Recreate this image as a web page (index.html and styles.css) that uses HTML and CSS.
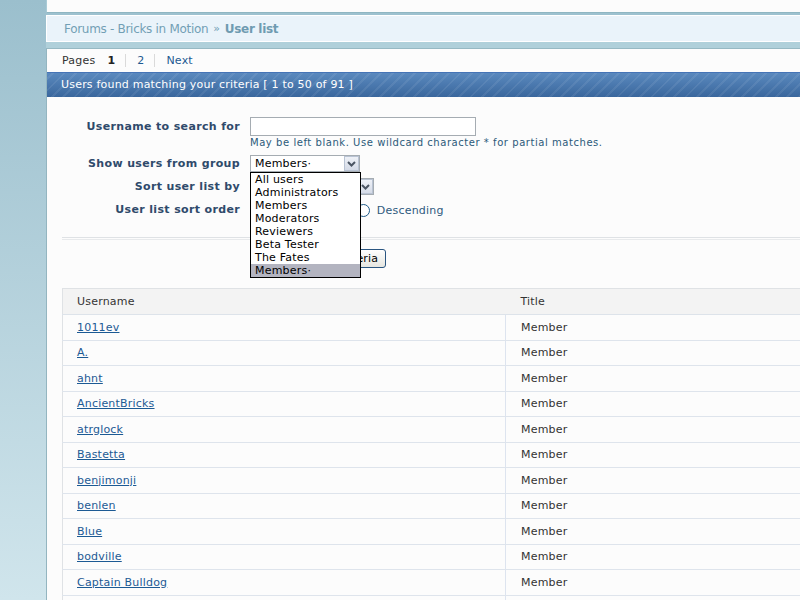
FILE: index.html
```html
<!DOCTYPE html>
<html>
<head>
<meta charset="utf-8">
<title>Forums - Bricks in Motion - User list</title>
<link rel="stylesheet" href="styles.css">
</head>
<body>
<div class="page">
  <div class="topblock"></div>
  <div class="band1"></div>
  <div class="crumbs"><a class="crumb-link">Forums - Bricks in Motion</a><span class="raquo">»</span><strong class="crumb-cur">User list</strong></div>
  <div class="band2"></div>
  <div class="main">
    <div class="pages">
      <span class="pages-label">Pages</span>
      <strong class="pg cur">1</strong>
      <a class="pg">2</a>
      <a class="pg">Next</a>
    </div>
    <div class="barhead">Users found matching your criteria [ 1 to 50 of 91 ]</div>
    <div class="form">
      <div class="grid">
        <label class="lbl lbl-input">Username to search for</label>
        <div class="ctl">
          <div class="textinput"></div>
          <div class="help">May be left blank. Use wildcard character * for partial matches.</div>
        </div>
        <label class="lbl lbl-select">Show users from group</label>
        <div class="ctl">
          <div class="select sel-group"><span class="sel-text">Members·</span><span class="sel-btn"><svg width="9" height="6" viewBox="0 0 9 6"><path d="M1 1 L4.5 4.5 L8 1" fill="none" stroke="#4b5563" stroke-width="2"/></svg></span></div>
        </div>
        <label class="lbl lbl-select">Sort user list by</label>
        <div class="ctl">
          <div class="select sel-sort"><span class="sel-text">Username</span><span class="sel-btn"><svg width="9" height="6" viewBox="0 0 9 6"><path d="M1 1 L4.5 4.5 L8 1" fill="none" stroke="#4b5563" stroke-width="2"/></svg></span></div>
        </div>
        <label class="lbl lbl-radio">User list sort order</label>
        <div class="ctl radios">
          <span class="radio"></span><span class="radio-label asc">Ascending</span>
          <span class="radio"></span><span class="radio-label">Descending</span>
        </div>
      </div>
      <div class="sep"></div>
      <div class="btnrow"><span class="button">Submit criteria</span></div>
      <div class="dropdown">
        <div class="opt">All users</div>
        <div class="opt">Administrators</div>
        <div class="opt">Members</div>
        <div class="opt">Moderators</div>
        <div class="opt">Reviewers</div>
        <div class="opt">Beta Tester</div>
        <div class="opt">The Fates</div>
        <div class="opt sel">Members·</div>
      </div>
    </div>
    <table class="users">
      <thead>
        <tr><th class="c1">Username</th><th class="c2">Title</th></tr>
      </thead>
      <tbody>
        <tr><td class="c1"><a>1011ev</a></td><td class="c2">Member</td></tr>
        <tr><td class="c1"><a>A.</a></td><td class="c2">Member</td></tr>
        <tr><td class="c1"><a>ahnt</a></td><td class="c2">Member</td></tr>
        <tr><td class="c1"><a>AncientBricks</a></td><td class="c2">Member</td></tr>
        <tr><td class="c1"><a>atrglock</a></td><td class="c2">Member</td></tr>
        <tr><td class="c1"><a>Bastetta</a></td><td class="c2">Member</td></tr>
        <tr><td class="c1"><a>benjimonji</a></td><td class="c2">Member</td></tr>
        <tr><td class="c1"><a>benlen</a></td><td class="c2">Member</td></tr>
        <tr><td class="c1"><a>Blue</a></td><td class="c2">Member</td></tr>
        <tr><td class="c1"><a>bodville</a></td><td class="c2">Member</td></tr>
        <tr><td class="c1"><a>Captain Bulldog</a></td><td class="c2">Member</td></tr>
        <tr><td class="c1"><a>Chris</a></td><td class="c2">Member</td></tr>
      </tbody>
    </table>
  </div>
</div>
</body>
</html>
```
FILE: styles.css
```css
* { box-sizing: border-box; }
html, body { margin: 0; padding: 0; }
body {
  width: 800px;
  height: 600px;
  overflow: hidden;
  font-family: "DejaVu Sans", Verdana, sans-serif;
  font-size: 11px;
  letter-spacing: 0.2px;
  color: #333;
  background: linear-gradient(#9bbfcd, #d0e5ec);
}
.page { margin-left: 46px; width: 754px; }
.topblock {
  height: 13px;
  background: #fcfcfc;
  border-left: 1px solid #a9cbd6;
  border-bottom: 1px solid #8fb6c2;
}
.band1 { height: 2px; background: #9dc1cf; }
.crumbs {
  height: 27px;
  background: #eaf3fa;
  border: 1px solid #ffffff;
  border-right: none;
  padding-left: 17px;
  display: flex;
  align-items: center;
  font-size: 12px;
  letter-spacing: -0.3px;
  color: #729fb5;
}
.crumb-link { color: #729fb5; }
.raquo { margin: 0 5px; font-size: 11px; }
.crumb-cur { color: #6f9bb1; }
.band2 { height: 6px; background: #b0d0da; }
.main {
  background: #fcfcfc;
  border-top: 1px solid #97b9c3;
  border-left: 1px solid #93b5c0;
  height: 560px;
  position: relative;
}
.pages {
  height: 23px;
  display: flex;
  align-items: center;
  padding-left: 15px;
  color: #333;
}
.pages-label { margin-right: 12px; }
.pg {
  line-height: 13px;
  padding: 0 10px 0 11px;
  color: #1d5a92;
}
.pg.cur { padding-left: 0; color: #222; }
.pg + .pg { border-left: 1px solid #dadada; }
.barhead {
  height: 25px;
  line-height: 24px;
  padding-left: 14px;
  color: #ffffff;
  border-top: 1px solid #4574b6;
  background:
    repeating-linear-gradient(-45deg, rgba(255,255,255,0.07) 0 2px, rgba(255,255,255,0) 2px 8px),
    linear-gradient(#5a89be, #3a679d);
}
.form { position: relative; padding-top: 20px; }
.grid {
  display: grid;
  grid-template-columns: 193px 1fr;
  column-gap: 10px;
  row-gap: 6px;
  align-items: start;
}
.lbl {
  text-align: right;
  font-weight: bold;
  letter-spacing: 0.35px;
  color: #2f4a6b;
}
.lbl-input { line-height: 19px; }
.lbl-select { line-height: 17px; }
.lbl-radio { line-height: 18px; }
.textinput {
  width: 226px;
  height: 19px;
  background: #fff;
  border: 1px solid #a5acb2;
}
.help {
  font-size: 10px;
  letter-spacing: 0.55px;
  line-height: 13px;
  color: #2b5a7a;
}
.select {
  height: 17px;
  background: #fff;
  border: 1px solid #a5acb2;
  display: flex;
  align-items: center;
  justify-content: space-between;
  color: #000;
}
.sel-group { width: 110px; }
.sel-sort { width: 124px; }
.sel-text { padding-left: 4px; line-height: 15px; }
.sel-btn {
  width: 15px;
  height: 15px;
  background: linear-gradient(#eef1f7, #d5dbe7);
  border: 1px solid #b9c3d3;
  display: flex;
  align-items: center;
  justify-content: center;
}
.radios { display: flex; align-items: center; height: 18px; }
.radio {
  width: 13px;
  height: 13px;
  border-radius: 50%;
  border: 1px solid #1f5a88;
  background: #fff;
}
.radio-label { margin-left: 7px; color: #2f5a7e; }
.radio-label.asc { margin-right: 28px; }
.sep {
  margin: 18px 0 0 15px;
  height: 3px;
  border-top: 1px solid #dfe2e5;
  border-bottom: 1px solid #e8eaec;
}
.btnrow { padding: 9px 0 0 239px; height: 48px; }
.button {
  display: inline-block;
  width: 100px;
  height: 19px;
  line-height: 17px;
  text-align: center;
  color: #000;
  border: 1px solid #2a5580;
  border-radius: 3px;
  background: linear-gradient(#ffffff, #e6e6e0);
}
.dropdown {
  position: absolute;
  left: 203px;
  top: 75px;
  width: 111px;
  background: #fff;
  border: 1px solid #000;
  color: #000;
  z-index: 5;
}
.opt { height: 13px; line-height: 13px; padding-left: 4px; }
.opt.sel { background: #b3b4c0; }
.users {
  margin-left: 15px;
  width: 900px;
  border-collapse: collapse;
  table-layout: fixed;
}
.users th {
  height: 26px;
  background: #f3f3f3;
  font-weight: normal;
  text-align: left;
  color: #333;
  border-top: 1px solid #dfe2e5;
  border-bottom: 1px solid #dde3ea;
}
.users th.c1 { border-left: 1px solid #dfe2e5; }
.users .c1 { width: 443px; padding-left: 14px; }
.users .c2 { padding-left: 15px; }
.users td {
  height: 25.5px;
  padding-top: 0;
  padding-bottom: 0;
  border-bottom: 1px solid #dee4ec;
  color: #333;
}
.users td.c1 { border-left: 1px solid #dfe2e5; }
.users td.c2 { border-left: 1px solid #dde4ef; }
.users a { color: #1c5a94; text-decoration: underline; }
```
